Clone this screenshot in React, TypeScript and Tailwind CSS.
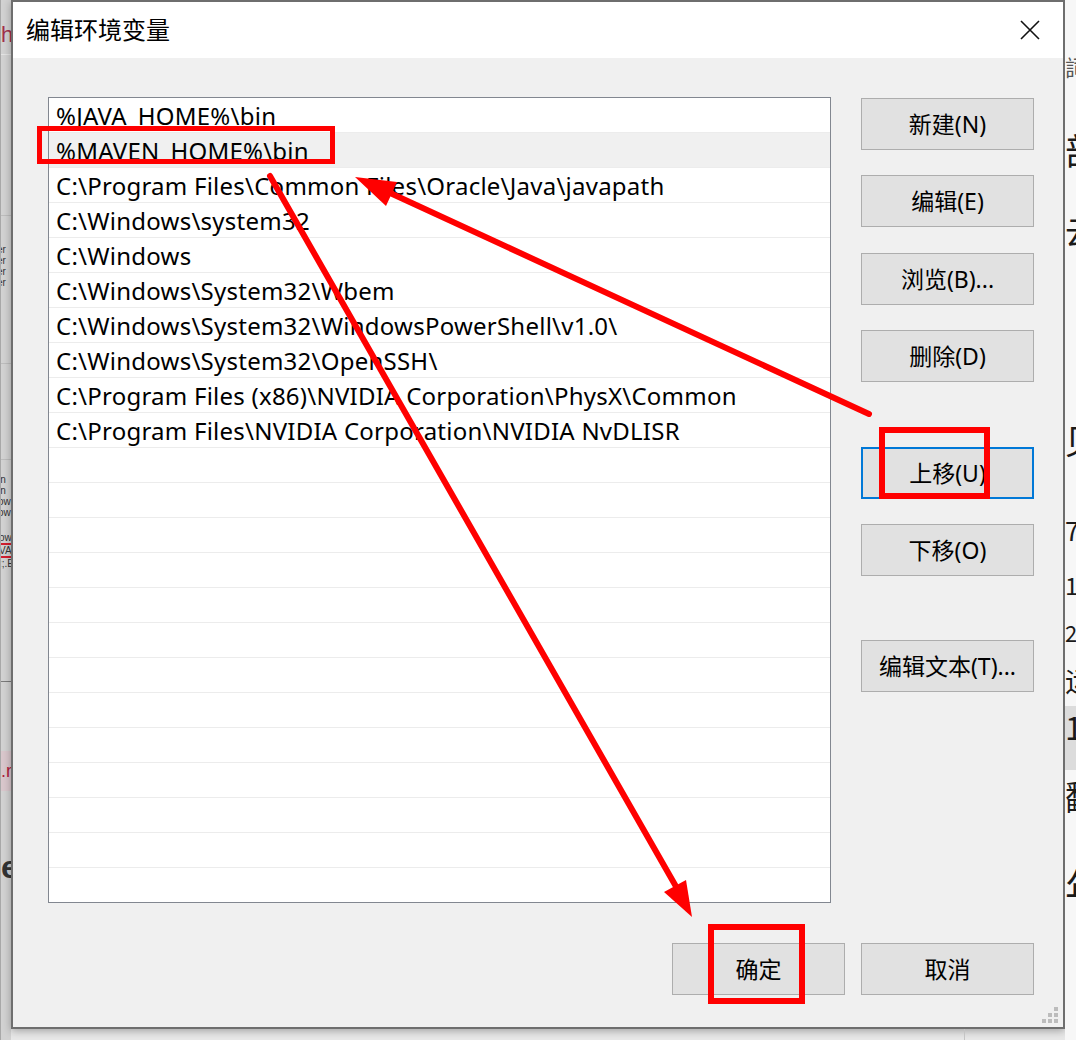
import clsx from "clsx";

const paths = [
  "%JAVA_HOME%\\bin",
  "%MAVEN_HOME%\\bin",
  "C:\\Program Files\\Common Files\\Oracle\\Java\\javapath",
  "C:\\Windows\\system32",
  "C:\\Windows",
  "C:\\Windows\\System32\\Wbem",
  "C:\\Windows\\System32\\WindowsPowerShell\\v1.0\\",
  "C:\\Windows\\System32\\OpenSSH\\",
  "C:\\Program Files (x86)\\NVIDIA Corporation\\PhysX\\Common",
  "C:\\Program Files\\NVIDIA Corporation\\NVIDIA NvDLISR",
];

// list always shows 23 slots, empty ones just keep the grid lines
const rows = [...paths, ...Array.from({ length: 13 }, () => "")];

const cjk = "font-['Noto_Sans','Noto_Sans_CJK_SC',sans-serif]";

function DialogButton({
  label,
  focused,
  className,
}: {
  label: string;
  focused?: boolean;
  className?: string;
}) {
  return (
    <button
      type="button"
      className={clsx(
        "flex h-[52px] w-[173px] items-center justify-center bg-[#e1e1e1] text-[23px] text-black",
        cjk,
        focused ? "border-2 border-[#0078d7]" : "border border-[#adadad]",
        className,
      )}
    >
      {label}
    </button>
  );
}

function PathList() {
  return (
    <div className="h-[806px] w-[783px] overflow-hidden border border-[#828790] bg-white">
      {rows.map((p, i) => (
        <div
          key={i}
          className={clsx(
            "h-[35px] border-b border-[#ececec] pl-[7px] text-[24px] leading-[35px] tracking-[0.24px] whitespace-nowrap text-black",
            "font-['Noto_Sans',sans-serif]",
            i === 1 && "bg-[#f0f0f0]",
          )}
        >
          {p}
        </div>
      ))}
    </div>
  );
}

function ResizeGrip() {
  return (
    <svg width="16" height="16" viewBox="0 0 16 16" className="absolute right-[5px] bottom-[4px]">
      <g fill="#bcbcbc">
        <rect x="12" y="0" width="4" height="4" />
        <rect x="6" y="6" width="4" height="4" />
        <rect x="12" y="6" width="4" height="4" />
        <rect x="0" y="12" width="4" height="4" />
        <rect x="6" y="12" width="4" height="4" />
        <rect x="12" y="12" width="4" height="4" />
      </g>
    </svg>
  );
}

function EnvDialog() {
  return (
    <div className="flex h-[1029px] flex-col border-2 border-[#6e6e6e] bg-[#f0f0f0] shadow-[0_2px_8px_rgba(0,0,0,0.3)]">
      <div className="flex h-[56px] items-center justify-between bg-white pr-[23px] pl-[13px]">
        <span className={clsx("text-[24px] text-black", cjk)}>编辑环境变量</span>
        <svg width="20" height="20" viewBox="0 0 20 20">
          <path d="M1 1L19 19M19 1L1 19" stroke="#111" strokeWidth="1.6" />
        </svg>
      </div>
      <div className="relative flex-1 pt-[39px] pr-[29px] pl-[35px]">
        <div className="flex gap-[30px]">
          <PathList />
          <div className="flex flex-col pt-[1px]">
            <DialogButton label="新建(N)" />
            <DialogButton label="编辑(E)" className="mt-[25px]" />
            <DialogButton label="浏览(B)..." className="mt-[26px]" />
            <DialogButton label="删除(D)" className="mt-[25px]" />
            <DialogButton label="上移(U)" focused className="mt-[65px]" />
            <DialogButton label="下移(O)" className="mt-[25px]" />
            <DialogButton label="编辑文本(T)..." className="mt-[64px]" />
          </div>
        </div>
        <div className="mt-[40px] flex justify-end gap-[16px]">
          <DialogButton label="确定" />
          <DialogButton label="取消" />
        </div>
        <ResizeGrip />
      </div>
    </div>
  );
}

// window peeking out behind the dialog on the left
function LeftEdge() {
  return (
    <div className="flex w-[11px] flex-col overflow-hidden border-l border-[#a8a8a8] bg-[#d2d2d2] text-[10px] leading-[11px] text-[#333] font-['Liberation_Sans',sans-serif]">
      <div className="mt-[24px] h-[22px] text-[22px] leading-[22px] text-[#a3304c]">h</div>
      <div className="mt-[8px] h-px bg-[#e4e4e4]" />
      <div className="mt-[160px] h-px bg-[#bdbdbd]" />
      <div className="mt-[28px] flex flex-col -indent-[4px]">
        <span>er</span>
        <span>er</span>
        <span>er</span>
        <span>er</span>
      </div>
      <div className="mt-[75px] h-px bg-[#bdbdbd]" />
      <div className="mt-[95px] h-px bg-[#bdbdbd]" />
      <div className="mt-[14px] flex flex-col -indent-[3px]">
        <span>in</span>
        <span>in</span>
        <span>ow</span>
        <span>ow</span>
      </div>
      <div className="mt-[14px] border-b-2 border-[#d21f2f] -indent-[2px]">ow</div>
      <div className="border-b-2 border-[#d21f2f] -indent-[2px]">VA</div>
      <div className="-indent-[2px]">:;.E</div>
      <div className="mt-[112px] h-px bg-[#7a7a7a]" />
      <div className="mt-[69px] h-[40px] bg-[#d9c7cc] text-[18px] leading-[40px] text-[#b0203c]">.r</div>
      <div className="mt-[62px] h-[28px] text-[32px] leading-[28px] font-bold text-[#333]">e</div>
    </div>
  );
}

// page text peeking out on the right
function RightEdge() {
  return (
    <div className="flex flex-1 flex-col overflow-hidden bg-[#f7f7f7] text-[#1a1a1a] font-['Noto_Sans_CJK_SC',sans-serif]">
      <div className="mt-[54px] h-[24px] text-[22px] leading-[24px] text-[#555]">詞</div>
      <div className="mt-[52px] h-[38px] text-[36px] leading-[38px]">部</div>
      <div className="mt-[44px] h-[36px] text-[32px] leading-[36px]">云</div>
      <div className="mt-[172px] h-[40px] text-[34px] leading-[40px]">见</div>
      <div className="mt-[56px] h-[28px] text-[26px] leading-[28px]">7</div>
      <div className="mt-[28px] h-[26px] text-[24px] leading-[26px]">1</div>
      <div className="mt-[22px] h-[24px] text-[22px] leading-[24px]">2</div>
      <div className="mt-[20px] h-[32px] text-[28px] leading-[32px]">运</div>
      <div className="mt-[10px] h-[64px] bg-[#dcdcdc] text-[32px] leading-[40px]">1</div>
      <div className="mt-[6px] h-[40px] text-[34px] leading-[40px]">翻</div>
      <div className="mt-[48px] h-[44px] text-[40px] leading-[44px]">年</div>
    </div>
  );
}

function Markup() {
  return (
    <svg
      className="pointer-events-none absolute inset-0"
      width="1076"
      height="1040"
      viewBox="0 0 1076 1040"
    >
      <g fill="none" stroke="#ff0000">
        <rect x="39.5" y="128.5" width="293" height="33" strokeWidth="5" />
        <rect x="882" y="430" width="105" height="66" strokeWidth="6" />
        <rect x="711" y="927" width="91" height="74" strokeWidth="6" />
      </g>
      <g stroke="#ff0000" strokeWidth="6" strokeLinecap="round">
        <line x1="869" y1="414" x2="388" y2="192" />
        <line x1="270" y1="176" x2="678" y2="890" />
      </g>
      <g fill="#ff0000">
        <polygon points="355,177 386,206 397,182" />
        <polygon points="692,917 664,892 686,880" />
      </g>
    </svg>
  );
}

export default function App() {
  return (
    <div className="relative flex h-[1040px] w-[1076px] overflow-hidden bg-[#e8e8e8]">
      <LeftEdge />
      <div className="flex w-[1054px] flex-col">
        <EnvDialog />
        <div className="flex flex-1 pl-[953px]">
          <div className="w-px bg-[#c4c4c4]" />
        </div>
      </div>
      <RightEdge />
      <Markup />
    </div>
  );
}
